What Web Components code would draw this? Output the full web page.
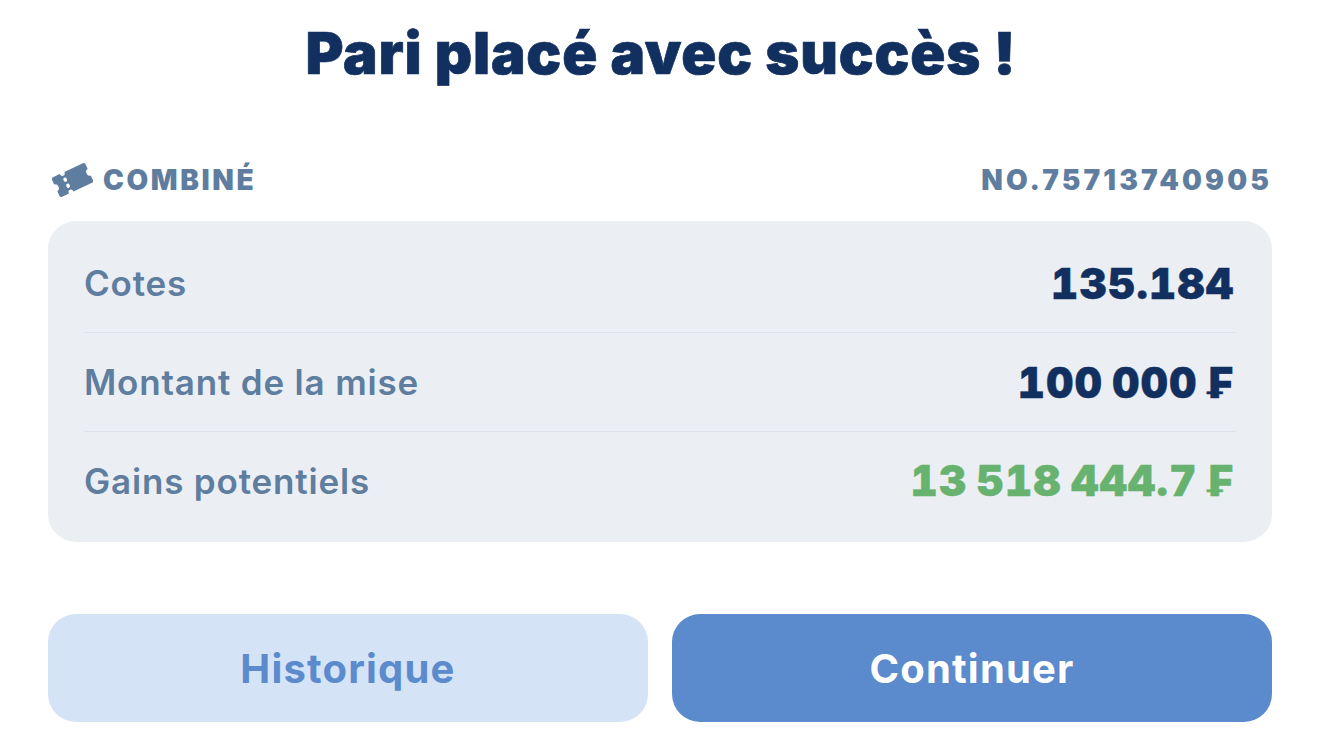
<!DOCTYPE html>
<html lang="fr">
<head>
<meta charset="utf-8">
<title>Pari placé</title>
<style>
  html, body { margin: 0; background: #fff; font-family: Inter, "Liberation Sans", sans-serif; }
  body { width: 1320px; height: 743px; overflow: hidden; }
</style>
</head>
<body>
<bet-success>
  <bet-row label="Cotes" value="135.184"></bet-row>
  <bet-row label="Montant de la mise" value="100 000 ₣"></bet-row>
  <bet-row label="Gains potentiels" value="13 518 444.7 ₣" tone="win"></bet-row>
</bet-success>

<script>
class BetRow extends HTMLElement {
  constructor() {
    super();
    this.attachShadow({ mode: "open" });
  }

  connectedCallback() {
    const color = this.getAttribute("tone") === "win" ? "#68b26f" : "#12305f";
    this.shadowRoot.innerHTML = `
      <style>
        :host {
          display: flex;
          justify-content: space-between;
          align-items: center;
          box-sizing: border-box;
          height: 99px;
          border-bottom: 1px solid #dfe2e8;
        }
        :host(:last-child) { border-bottom: none; padding-bottom: 2px; }
        .label { font-size: 35px; font-weight: 600; letter-spacing: 0.82px; color: #5f7d9f; }
        .value {
          font-size: 42px;
          font-weight: 900;
          font-variant-numeric: tabular-nums;
          letter-spacing: 1.4px;
          word-spacing: -3.5px;
          margin-right: 1.5px;
          -webkit-text-stroke: 0.4px ${color};
          color: ${color};
          white-space: pre;
        }
      </style>
      <span class="label">${this.getAttribute("label")}</span>
      <span class="value">${this.getAttribute("value")}</span>
    `;
  }
}

class BetSuccess extends HTMLElement {
  constructor() {
    super();
    this.attachShadow({ mode: "open" });
  }

  connectedCallback() {
    this.shadowRoot.innerHTML = `
      <style>
        :host { display: block; padding: 0 48px; }
        h1 {
          margin: 0;
          height: 108px;
          line-height: 106px;
          padding-left: 2px;
          text-align: center;
          font-size: 58px;
          font-weight: 900;
          letter-spacing: 0.8px;
          -webkit-text-stroke: 0.7px #12305f;
          color: #12305f;
        }
        .head {
          display: flex;
          justify-content: space-between;
          align-items: center;
          box-sizing: border-box;
          height: 113px;
          padding: 30px 0 0 4px;
          font-size: 28px;
          font-weight: 900;
          letter-spacing: 3.15px;
          color: #5f7d9f;
        }
        .kind { display: flex; align-items: center; gap: 10px; letter-spacing: 2.6px; }
        .card {
          display: block;
          padding: 13px 36px 11px;
          background: #ebeff4;
          border-radius: 28px;
        }
        .actions { display: flex; gap: 24px; margin-top: 72px; }
        button {
          flex: 1;
          height: 108px;
          border: none;
          border-radius: 28px;
          font: 700 40px Inter, "Liberation Sans", sans-serif;
          letter-spacing: 1.2px;
        }
        .ghost { background: #d5e3f7; color: #5b8acd; }
        .main { background: #5b8acd; color: #fff; }
      </style>
      <h1>Pari placé avec succès !</h1>
      <div class="head">
        <span class="kind">
          <svg width="41" height="34" viewBox="0 0 41 34">
            <g transform="rotate(-25 20.5 17) translate(20.5 17) scale(1 1.2) translate(-20.5 -17)">
              <path fill="#5f7d9f" d="M4 8h7.500a2.500 2.500 0 0 0 5 0H37a2 2 0 0 1 2 2v4a3 3 0 0 0 0 6v4a2 2 0 0 1-2 2H16.500a2.500 2.500 0 0 0-5 0H4a2 2 0 0 1-2-2v-4a3 3 0 0 0 0-6v-4a2 2 0 0 1 2-2z"/>
              <circle cx="14" cy="14.200" r="1.800" fill="#fff"/>
              <circle cx="14" cy="19.800" r="1.800" fill="#fff"/>
            </g>
          </svg>
          COMBINÉ
        </span>
        <span>NO.75713740905</span>
      </div>
      <div class="card"><slot></slot></div>
      <div class="actions">
        <button class="ghost">Historique</button>
        <button class="main">Continuer</button>
      </div>
    `;
  }
}

customElements.define("bet-row", BetRow);
customElements.define("bet-success", BetSuccess);
</script>
</body>
</html>
